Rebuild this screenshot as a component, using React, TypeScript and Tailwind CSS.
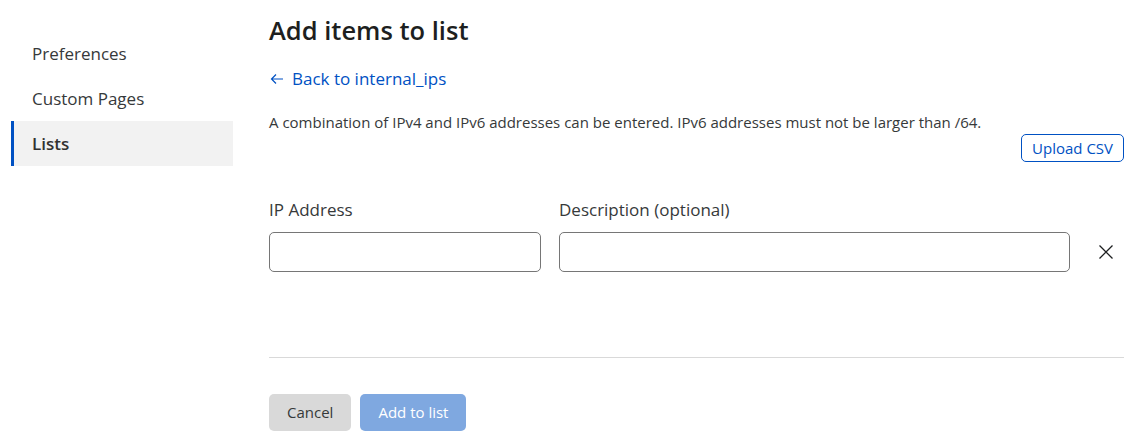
import React from 'react';

const navItems = ['Preferences', 'Custom Pages', 'Lists'];

function Sidebar({ active }: { active: string }) {
  return (
    <nav className="w-[222px] shrink-0 pt-[31px] ml-[11px]">
      {navItems.map((item) => (
        <a
          key={item}
          href="#"
          className={
            item === active
              ? 'flex h-[45px] items-center border-l-[3px] border-[#0051c3] bg-[#f2f2f2] pl-[18px] font-semibold text-[#313131]'
              : 'flex h-[45px] items-center border-l-[3px] border-transparent pl-[18px] text-[#36393a]'
          }
        >
          {item}
        </a>
      ))}
    </nav>
  );
}

function TextField({ label, className }: { label: string; className?: string }) {
  return (
    <label className={'flex flex-col ' + (className ?? '')}>
      <span className="mb-[11px] text-[17px] leading-[22px] text-[#36393a]">{label}</span>
      <input
        type="text"
        className="h-[40px] w-full rounded-[5px] border border-[#767676] bg-white px-3 text-[15px] outline-none"
      />
    </label>
  );
}

export default function App() {
  return (
    <div className="flex min-h-[445px] bg-white text-[17px] text-[#36393a] [font-family:'Open_Sans',sans-serif]">
      <Sidebar active="Lists" />

      <main className="ml-[36px] mr-[12px] flex-1 pt-[14px]">
        <h1 className="text-[25.5px] font-semibold leading-[32px] text-[#1d1f20]">Add items to list</h1>

        <a href="#" className="mt-[21px] flex items-center gap-[7px] leading-[24px] text-[#0051c3]">
          <svg width="16" height="16" viewBox="0 0 16 16" fill="none" stroke="currentColor" strokeWidth="1.2">
            <path d="M14 8H2.5M7 3.5L2.5 8 7 12.5" />
          </svg>
          Back to internal_ips
        </a>

        <p className="mt-[21px] text-[15px] leading-[20px] text-[#36393a]">
          A combination of IPv4 and IPv6 addresses can be entered. IPv6 addresses must not be larger than /64.
        </p>

        <div className="mt-[2px] flex justify-end">
          <button className="h-[28px] rounded-[5px] border border-[#0051c3] px-[10px] text-[15px] leading-[20px] text-[#0051c3]">
            Upload CSV
          </button>
        </div>

        <div className="mt-[37px] flex items-end gap-[18px]">
          <TextField label="IP Address" className="w-[272px]" />
          <TextField label="Description (optional)" className="w-[511px]" />
          <button className="mb-[12px] ml-[10px] text-[#1d1f20]" aria-label="Remove">
            <svg width="16" height="16" viewBox="0 0 16 16" fill="none" stroke="currentColor" strokeWidth="1.3">
              <path d="M1.5 1.5l13 13M14.5 1.5l-13 13" />
            </svg>
          </button>
        </div>

        <hr className="mt-[85px] border-t border-[#d9d9d9]" />

        <div className="mt-[36px] flex gap-[9px]">
          <button className="h-[37px] rounded-[5px] bg-[#d9d9d9] px-[18px] text-[15px] text-[#36393a]">Cancel</button>
          <button className="h-[37px] rounded-[5px] bg-[#7fa8e0] px-[18px] text-[15px] text-white">Add to list</button>
        </div>
      </main>
    </div>
  );
}
